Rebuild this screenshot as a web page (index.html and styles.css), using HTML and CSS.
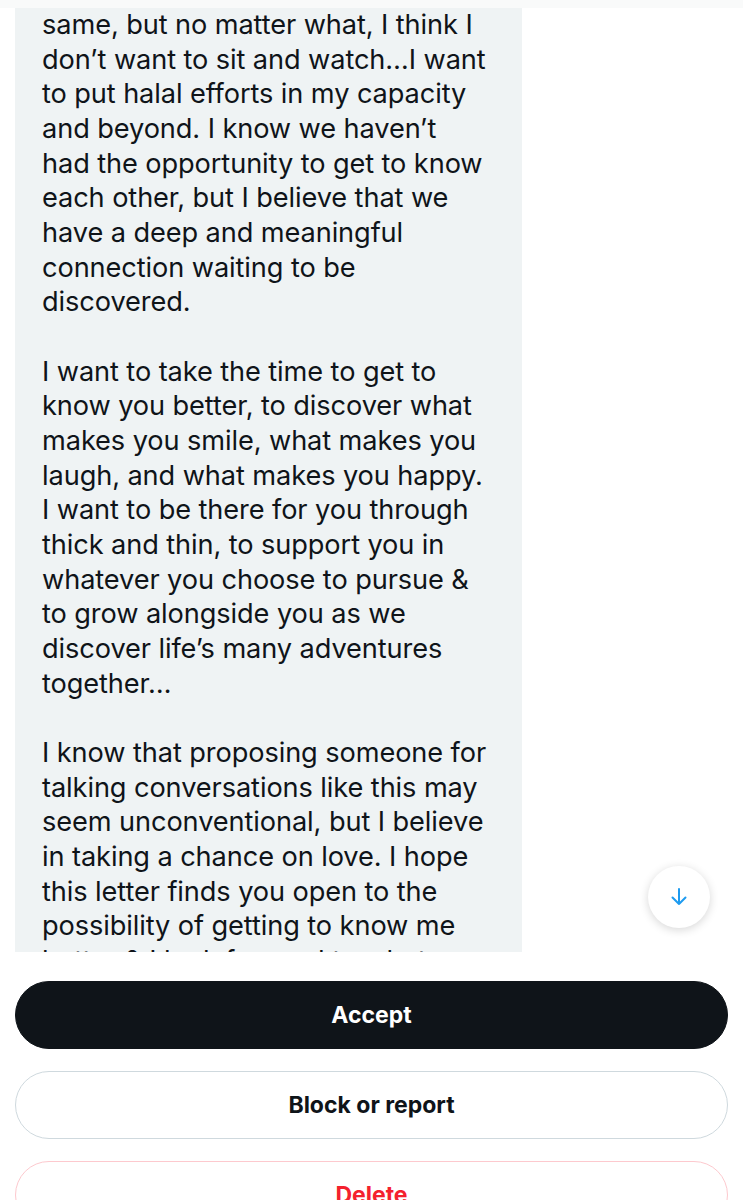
FILE: index.html
```html
<!DOCTYPE html>
<html lang="en">

<head>
    <meta charset="utf-8">
    <meta name="viewport" content="width=device-width, initial-scale=1.0">
    <title>Message request</title>
    <link rel="stylesheet" href="styles.css">
</head>

<body>
    <div class="top_strip"></div>

    <div class="conversation">
        <div class="bubble">
            <p>same, but no matter what, I think I<br>
                don’t want to sit and watch…I want<br>
                to put halal efforts in my capacity<br>
                and beyond. I know we haven’t<br>
                had the opportunity to get to know<br>
                each other, but I believe that we<br>
                have a deep and meaningful<br>
                connection waiting to be<br>
                discovered.</p>

            <p>I want to take the time to get to<br>
                know you better, to discover what<br>
                makes you smile, what makes you<br>
                laugh, and what makes you happy.<br>
                I want to be there for you through<br>
                thick and thin, to support you in<br>
                whatever you choose to pursue &amp;<br>
                to grow alongside you as we<br>
                discover life’s many adventures<br>
                together…</p>

            <p>I know that proposing someone for<br>
                talking conversations like this may<br>
                seem unconventional, but I believe<br>
                in taking a chance on love. I hope<br>
                this letter finds you open to the<br>
                possibility of getting to know me<br>
                better &amp; I look forward to what<br>
                the future holds for us.</p>
        </div>

        <button class="scroll_down" aria-label="Scroll to bottom">
            <svg viewBox="0 0 24 24" width="24" height="24">
                <path d="M12 4v15M5.5 12.5L12 19l6.5-6.5" fill="none" stroke="#1d9bf0" stroke-width="2" stroke-linecap="round" stroke-linejoin="round" />
            </svg>
        </button>
    </div>

    <div class="actions">
        <button class="btn accept">Accept</button>
        <button class="btn block">Block or report</button>
        <button class="btn delete">Delete</button>
    </div>
</body>

</html>
```

FILE: styles.css
```css
* {
    padding: 0;
    margin: 0;
    box-sizing: border-box;
}

html,
body {
    width: 100%;
    height: 100%;
    background: #fff;
    font-family: Inter, "Noto Sans", "Liberation Sans", sans-serif;
    color: #0f1419;
    overflow: hidden;
}

.top_strip {
    height: 8px;
    background: #f9fafa;
}

.conversation {
    height: 944px;
    overflow: hidden;
    position: relative;
}

.bubble {
    width: 507px;
    margin-left: 15px;
    background: #eff3f4;
    padding: 0 20px 30px 27px;
}

.bubble p {
    font-size: 27.2px;
    line-height: 34.67px;
    letter-spacing: -0.1px;
    white-space: nowrap;
    margin-bottom: 34.67px;
}

.scroll_down {
    position: absolute;
    left: 648px;
    top: 858px;
    width: 62px;
    height: 62px;
    border-radius: 50%;
    border: none;
    background: #fff;
    box-shadow: 0 2px 10px rgba(0, 0, 0, .16);
    display: flex;
    align-items: center;
    justify-content: center;
}

.actions {
    padding: 29px 15px 0;
    display: flex;
    flex-direction: column;
    gap: 22px;
}

.btn {
    width: 100%;
    height: 68px;
    border-radius: 34px;
    font-family: Inter, "Liberation Sans", sans-serif;
    font-size: 23px;
    font-weight: 700;
    background: #fff;
    border: 1px solid #cfd9de;
    color: #0f1419;
}

.btn.accept {
    background: #0f1419;
    border-color: #0f1419;
    color: #fff;
}

.btn.delete {
    border-color: #fdc9ce;
    color: #f4212e;
}
```
